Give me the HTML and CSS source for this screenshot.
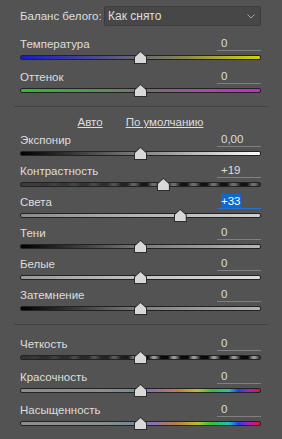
FILE: index.html
```html
<!DOCTYPE html>
<html lang="ru">
<head>
  <meta charset="UTF-8" />
  <title>Основные</title>
  <link rel="stylesheet" href="styles.css">
</head>
<body>
  <div class="panel">
    <div class="wb-row">
      <span class="wb-label">Баланс белого:</span>
      <div class="select">
        <span>Как снято</span>
        <svg class="chevron" width="8" height="5" viewBox="0 0 8 5"><path d="M0.5 0.5 L4 4 L7.5 0.5" fill="none" stroke="#a8a8a8" stroke-width="1"/></svg>
      </div>
    </div>

    <div class="group group-wide">
      <div class="slider-row">
        <div class="head"><span class="label">Температура</span><span class="value">0</span></div>
        <div class="slider"><div class="track track-temp"></div><div class="thumb" style="left:50%"></div></div>
      </div>
      <div class="slider-row">
        <div class="head"><span class="label">Оттенок</span><span class="value">0</span></div>
        <div class="slider"><div class="track track-tint"></div><div class="thumb" style="left:50%"></div></div>
      </div>
    </div>

    <div class="sep"></div>

    <div class="links">
      <a href="#">Авто</a>
      <a href="#">По умолчанию</a>
    </div>

    <div class="group">
      <div class="slider-row">
        <div class="head"><span class="label">Экспонир</span><span class="value">0,00</span></div>
        <div class="slider"><div class="track track-exposure"></div><div class="thumb" style="left:50%"></div></div>
      </div>
      <div class="slider-row">
        <div class="head"><span class="label">Контрастность</span><span class="value">+19</span></div>
        <div class="slider"><div class="track track-bands"></div><div class="thumb" style="left:59.5%"></div></div>
      </div>
      <div class="slider-row">
        <div class="head"><span class="label">Света</span><span class="value active"><span class="selected">+33</span></span></div>
        <div class="slider"><div class="track track-highlights"></div><div class="thumb" style="left:66.5%"></div></div>
      </div>
      <div class="slider-row">
        <div class="head"><span class="label">Тени</span><span class="value">0</span></div>
        <div class="slider"><div class="track track-shadows"></div><div class="thumb" style="left:50%"></div></div>
      </div>
      <div class="slider-row">
        <div class="head"><span class="label">Белые</span><span class="value">0</span></div>
        <div class="slider"><div class="track track-whites"></div><div class="thumb" style="left:50%"></div></div>
      </div>
      <div class="slider-row">
        <div class="head"><span class="label">Затемнение</span><span class="value">0</span></div>
        <div class="slider"><div class="track track-blacks"></div><div class="thumb" style="left:50%"></div></div>
      </div>
    </div>

    <div class="sep sep-low"></div>

    <div class="group group-wide">
      <div class="slider-row">
        <div class="head"><span class="label">Четкость</span><span class="value">0</span></div>
        <div class="slider"><div class="track track-clarity"></div><div class="thumb" style="left:50%"></div></div>
      </div>
      <div class="slider-row">
        <div class="head"><span class="label">Красочность</span><span class="value">0</span></div>
        <div class="slider"><div class="track track-vibrance"></div><div class="thumb" style="left:50%"></div></div>
      </div>
      <div class="slider-row">
        <div class="head"><span class="label">Насыщенность</span><span class="value">0</span></div>
        <div class="slider"><div class="track track-vibrance"></div><div class="thumb" style="left:50%"></div></div>
      </div>
    </div>
  </div>
</body>
</html>
```

FILE: styles.css
```css
body {
  margin: 0;
  background-color: #535353;
  font-family: 'Liberation Sans', Arial, sans-serif;
  font-size: 11.5px;
  color: #dedede;
}

.panel {
  width: 282px;
  height: 439px;
  box-sizing: border-box;
  padding: 6px 21px 0 20px;
  display: flex;
  flex-direction: column;
}

.wb-row {
  display: flex;
  align-items: center;
  height: 20px;
}

.wb-label {
  width: 84px;
}

.select {
  flex: 1;
  height: 20px;
  box-sizing: border-box;
  background: #474747;
  border: 1px solid #3d3d3d;
  border-radius: 2px;
  display: flex;
  align-items: center;
  justify-content: space-between;
  padding: 0 5px 0 3px;
  font-size: 12px;
}

.group {
  display: flex;
  flex-direction: column;
  gap: 4px;
  margin-top: 10px;
}

.group-wide {
  gap: 6px;
}

.head {
  display: flex;
  justify-content: space-between;
  align-items: flex-end;
  height: 15px;
}

.label {
  line-height: 14px;
}

.value {
  width: 44px;
  height: 15px;
  box-sizing: border-box;
  padding-left: 4px;
  line-height: 14px;
  border-bottom: 1px solid #808080;
}

.value.active {
  border-bottom-color: #2a6fd2;
}

.selected {
  background: #0f67cf;
  color: #fff;
  padding: 1px 0;
}

.slider {
  position: relative;
  height: 12px;
}

.track {
  position: absolute;
  left: 0;
  right: 0;
  top: 4px;
  height: 3px;
  border: 1px solid #222;
  border-radius: 2px;
}

.thumb {
  position: absolute;
  top: 0;
  width: 13px;
  height: 13px;
  margin-left: -6.5px;
  background: #2c2c2c;
  clip-path: polygon(50% 0, 100% 45%, 100% 100%, 0 100%, 0 45%);
}

.thumb::before {
  content: "";
  position: absolute;
  left: 1px;
  top: 1px;
  width: 11px;
  height: 11px;
  background: #d8d8d8;
  clip-path: polygon(50% 0, 100% 45%, 100% 100%, 0 100%, 0 45%);
}

.track-temp {
  background: linear-gradient(to right, #1a1ac8, #505088 35%, #6a6a70 50%, #808058 65%, #d4d400);
}

.track-tint {
  background: linear-gradient(to right, #28c028, #608a60 35%, #7a6a7a 55%, #a050a0 75%, #d420d4);
}

.track-exposure {
  background: linear-gradient(to right, #000, #fff);
}

.track-bands {
  background:
    linear-gradient(to right, #3c3c3c 0, rgba(60, 60, 60, 0.7) 35%, rgba(0, 0, 0, 0) 55%),
    repeating-linear-gradient(to right, #111 0, #111 6px, #6e6e6e 11px, #6e6e6e 14px, #111 20px);
}

.track-highlights {
  background: linear-gradient(to right, #8a8a8a, #b4b4b4 50%, #cfcfcf);
}

.track-shadows {
  background: linear-gradient(to right, #000, #7a7a7a 50%, #b8b8b8);
}

.track-whites {
  background: linear-gradient(to right, #9a9a9a, #c4c4c4 50%, #dcdcdc);
}

.track-blacks {
  background: linear-gradient(to right, #000, #808080 50%, #b4b4b4);
}

.track-clarity {
  background:
    linear-gradient(to right, #333 0, rgba(51, 51, 51, 0.6) 40%, rgba(0, 0, 0, 0) 55%),
    repeating-linear-gradient(to right, #080808 0, #080808 7px, #9a9a9a 12px, #9a9a9a 14px, #080808 20px);
}

.track-vibrance {
  background: linear-gradient(to right, #8c8c8c 0, #88908a 35%, #6a8aa0 50%, #8a70b0 55%, #c08040 66%, #b8c030 74%, #30c040 80%, #20c0c0 87%, #2040e0 91%, #a020d0 95%, #e01040 100%);
}

.sep {
  height: 1px;
  background: #424242;
  margin: 10px -7px 0 -6px;
}

.sep-low + .group {
  margin-top: 11px;
}

.links {
  display: flex;
  justify-content: center;
  gap: 23px;
  margin-top: 8px;
  line-height: 14px;
}

.links a {
  color: #dedede;
  text-decoration: underline;
}

.links + .group {
  margin-top: 3px;
}
```
